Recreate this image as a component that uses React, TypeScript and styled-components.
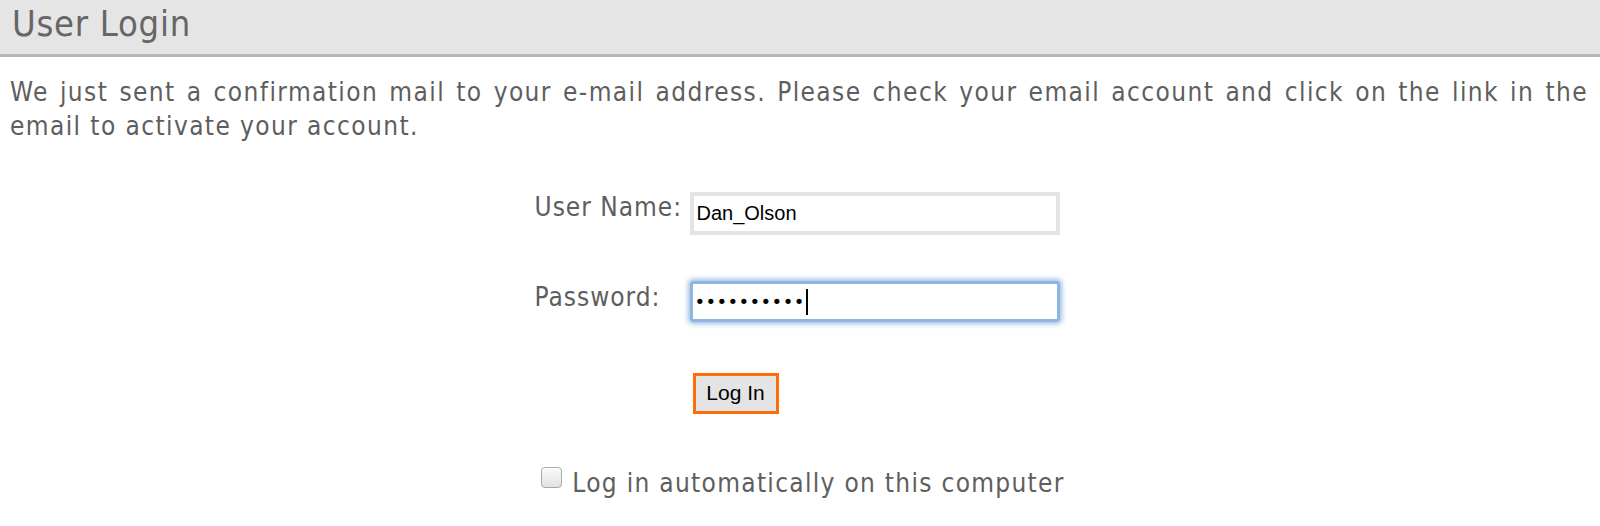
import styled, { createGlobalStyle } from "styled-components";

const GlobalStyle = createGlobalStyle`
    html, body {
        margin: 0;
        padding: 0;
        background: #ffffff;
    }
    body {
        font-family: "DejaVu Sans Condensed", "DejaVu Sans", sans-serif;
        color: #5e5e5e;
    }
`

export default function App() {
    return (
        <Page>
            <GlobalStyle />
            <Header>
                <Title>User Login</Title>
            </Header>
            <Message>
                We just sent a confirmation mail to your e-mail address. Please check your email account and click on the link in the email to activate your account.
            </Message>
            <LoginForm onSubmit={e => e.preventDefault()}>
                <Label htmlFor="username">User Name:</Label>
                <TextInput id="username" type="text" defaultValue="Dan_Olson" />
                <Label htmlFor="password">Password:</Label>
                <PasswordField id="password">
                    ••••••••••<Caret />
                </PasswordField>
                <span />
                <ButtonCell>
                    <LoginButton type="submit">Log In</LoginButton>
                </ButtonCell>
            </LoginForm>
            <RememberRow>
                <Checkbox type="checkbox" id="remember" />
                <RememberLabel htmlFor="remember">Log in automatically on this computer</RememberLabel>
            </RememberRow>
        </Page>
    )
}

const Page = styled.div`
    width: 1600px;
    min-height: 526px;
    display: flex;
    flex-direction: column;
`

const Header = styled.div`
    height: 54px;
    background: #e5e5e5;
    border-bottom: 3px solid #b5b5b5;
    padding: 0 12px;
    display: flex;
    align-items: center;
`

const Title = styled.h1`
    margin: 0 0 8px 0;
    font-size: 36px;
    font-weight: normal;
    letter-spacing: 0.75px;
    color: #666666;
`

const Message = styled.p`
    margin: 18px 12px 0 10px;
    font-size: 26px;
    line-height: 34px;
    letter-spacing: 1.4px;
    text-align: justify;
`

const LoginForm = styled.form`
    align-self: center;
    margin: 48px 4px 0 0;
    display: grid;
    grid-template-columns: 155px 372px;
    grid-auto-rows: 44px;
    row-gap: 46px;
    align-items: center;
`

const Label = styled.label`
    font-size: 26px;
    letter-spacing: 1px;
    padding-bottom: 13px;
`

const TextInput = styled.input`
    box-sizing: border-box;
    width: 370px;
    height: 43px;
    border: 4px solid #e4e4e4;
    padding: 0 3px;
    font-family: "Liberation Sans", sans-serif;
    font-size: 20px;
    color: #000000;
    outline: none;
`

const PasswordField = styled.div`
    box-sizing: border-box;
    width: 370px;
    height: 41px;
    margin-bottom: 3px;
    border: 3px solid #8db5e0;
    box-shadow: 0 0 5px 2px rgba(125, 168, 218, 0.75);
    border-radius: 3px;
    padding: 0 2px;
    display: flex;
    align-items: center;
    font-family: "DejaVu Sans", sans-serif;
    font-size: 18px;
    letter-spacing: 0.4px;
    color: #000000;
`

const Caret = styled.span`
    display: inline-block;
    width: 2px;
    height: 26px;
    margin-left: 1px;
    background: #000000;
`

const ButtonCell = styled.div`
    display: flex;
    align-items: center;
`

const LoginButton = styled.button`
    box-sizing: border-box;
    width: 86px;
    height: 41px;
    margin-left: 3px;
    background: #e4e4e4;
    border: 3px solid #ff6c0a;
    font-family: "Liberation Sans", sans-serif;
    font-size: 21px;
    color: #000000;
    padding: 0;
`

const RememberRow = styled.div`
    align-self: center;
    margin-top: 52px;
    display: flex;
    align-items: center;
    gap: 10px;
    margin-left: 6px;
`

const Checkbox = styled.input`
    appearance: none;
    margin: 0 0 10px 0;
    width: 21px;
    height: 21px;
    border: 1px solid #a9a9a9;
    border-radius: 4px;
    background: linear-gradient(#fbfbfb, #e2e2e2);
    box-shadow: inset 0 1px 0 #ffffff;
`

const RememberLabel = styled.label`
    font-size: 26px;
    letter-spacing: 1.3px;
`
